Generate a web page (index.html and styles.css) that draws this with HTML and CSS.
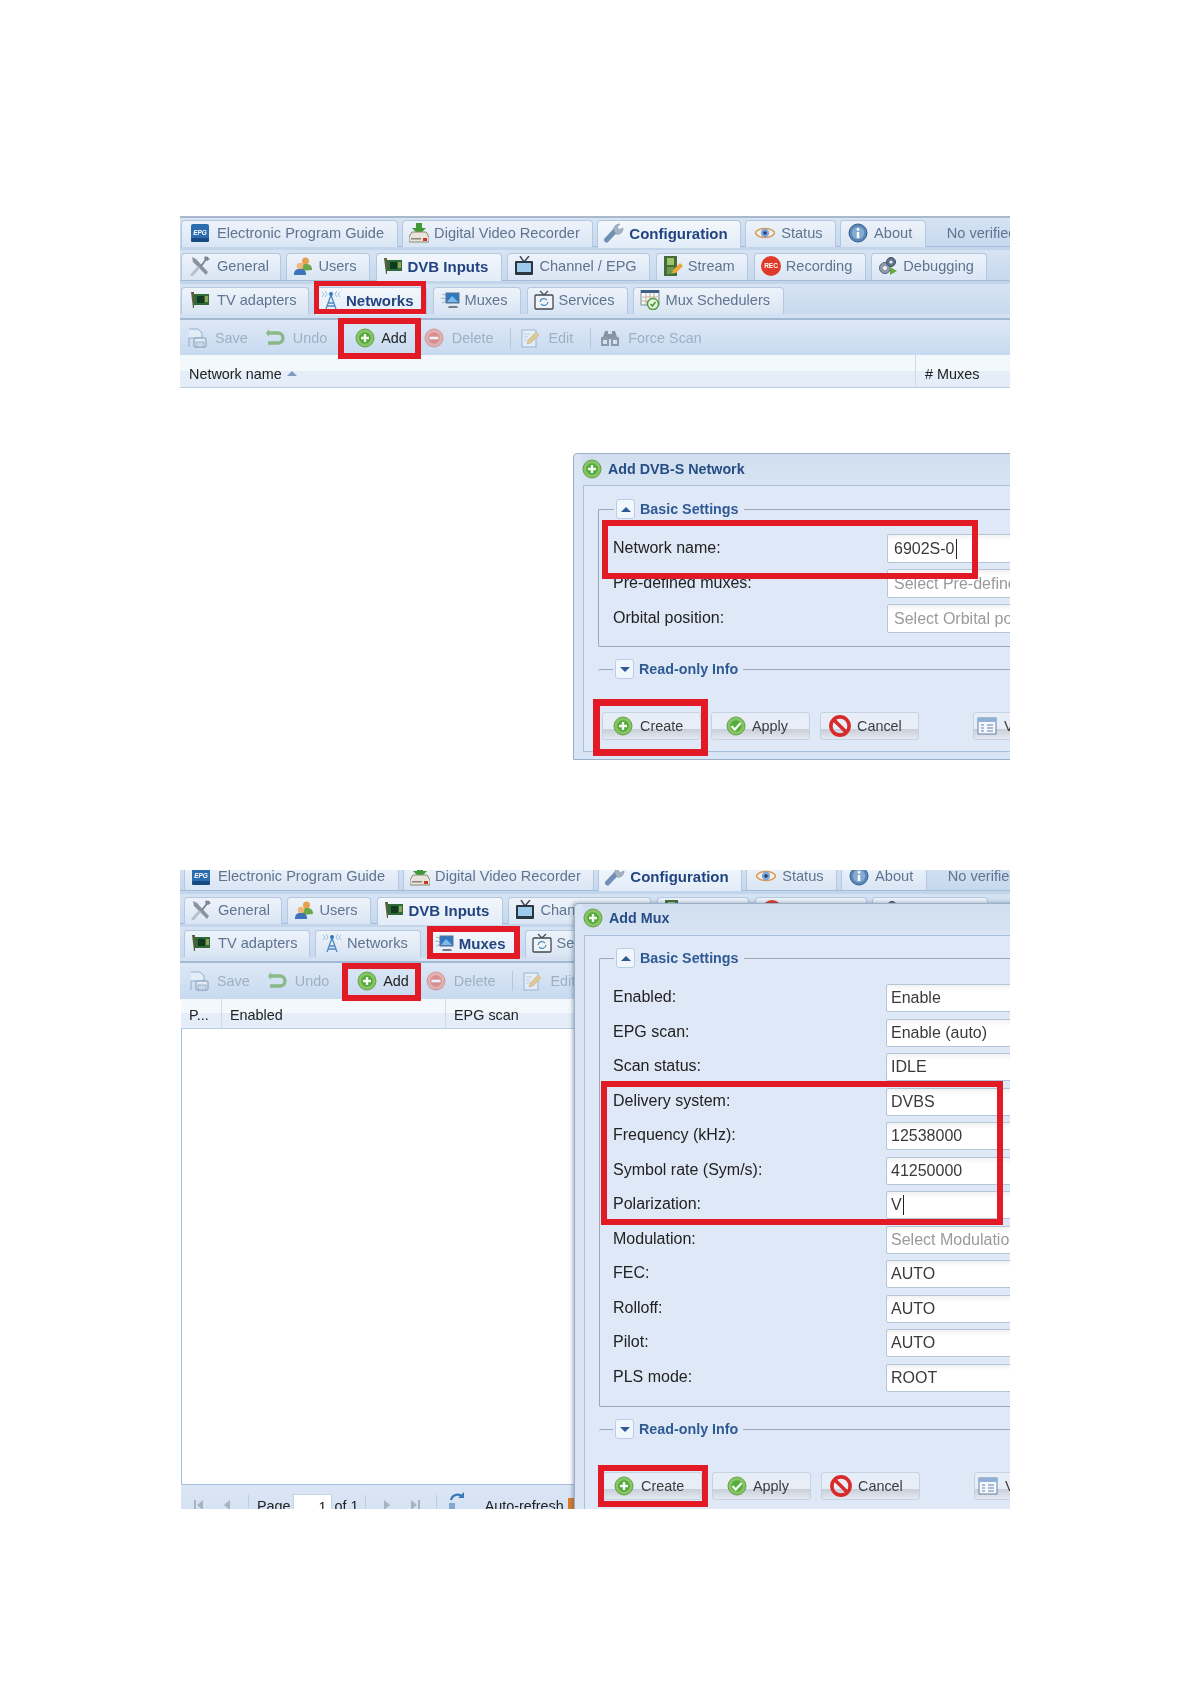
FILE: index.html
```html
<!DOCTYPE html>
<html lang="en">
<head>
<meta charset="utf-8">
<title>DVB network and mux setup</title>
<link rel="stylesheet" href="styles.css">
</head>
<body>
<svg class="defs" width="0" height="0" aria-hidden="true">
  <symbol id="epg" viewBox="0 0 20 20"><rect x="1" y="1" width="18" height="18" rx="2" fill="#2c6db0"/><rect x="1" y="15" width="18" height="4" rx="1.5" fill="#174a80"/><text x="10" y="11.5" font-size="6.5" font-weight="700" font-style="italic" font-family="Liberation Sans" text-anchor="middle" fill="#fff">EPG</text></symbol>
  <symbol id="dvr" viewBox="0 0 20 20"><path d="M7 0h6v5h4l-7 7-7-7h4z" fill="#3f9a35"/><path d="M0 14l3-5h14l3 5v5H0z" fill="#e8e4dc" stroke="#8d8577"/><path d="M2 15h10v1.500H2z" fill="#8d8577"/><rect x="14" y="15" width="4" height="3" fill="#c9372c"/></symbol>
  <symbol id="wrench" viewBox="0 0 20 20"><path d="M2.500 17L11 8" stroke="#6f8fb4" stroke-width="5" stroke-linecap="round"/><path d="M10 8c-1-3 1-7 6-7l-3 3 2 3 4-2c0 4-3 7-7 6z" fill="#a7b4c3" stroke="#75889e" stroke-width=".6"/></symbol>
  <symbol id="eye" viewBox="0 0 20 20"><path d="M0 10c4-6 16-6 20 0-4 6-16 6-20 0z" fill="#f4f1ea" stroke="#d59a58" stroke-width="1.400"/><circle cx="10" cy="10" r="4.200" fill="#7fa5d6"/><circle cx="10" cy="10" r="1.800" fill="#1f3f78"/></symbol>
  <symbol id="info" viewBox="0 0 20 20"><circle cx="10" cy="10" r="9" fill="#5a87b8" stroke="#33608f"/><circle cx="10" cy="10" r="6.200" fill="#86abd2"/><rect x="8.800" y="9" width="2.400" height="6" fill="#fff"/><circle cx="10" cy="6.400" r="1.400" fill="#fff"/></symbol>
  <symbol id="tools" viewBox="0 0 20 20"><path d="M2 1l4 2 12 13-2 3L3 6z" fill="#8a94a0"/><path d="M18 1l-7 9" stroke="#6d7784" stroke-width="1.500"/><path d="M15 0l5 3-3 2-3-2z" fill="#7d8793"/><path d="M8 12l-6 7" stroke="#b8c0c9" stroke-width="3" stroke-linecap="round"/></symbol>
  <symbol id="users" viewBox="0 0 20 20"><circle cx="12.500" cy="5" r="3.500" fill="#e8a04c"/><path d="M7 15c0-5 2-7 6-7s6 2 6 6z" fill="#6aa84a"/><circle cx="7" cy="10" r="3.300" fill="#f0b878"/><path d="M1 19c0-5 2-6 6-6s6 1 6 6z" fill="#3d74b8"/></symbol>
  <symbol id="card" viewBox="0 0 20 20"><path d="M1 2h3v16H3z" fill="#5a5f3a"/><rect x="4" y="4" width="15" height="11" fill="#2f6a38"/><rect x="7" y="6" width="7" height="7" fill="#123a1e"/><rect x="15" y="6" width="3" height="6" fill="#8da35c"/></symbol>
  <symbol id="tv" viewBox="0 0 20 20"><path d="M6 0l4 6 5-6" fill="none" stroke="#3a4653" stroke-width="1.400"/><rect x="1" y="5" width="18" height="14" rx="1" fill="#2b3640"/><rect x="3" y="7" width="14" height="9" fill="#9ccbec"/></symbol>
  <symbol id="stream" viewBox="0 0 20 20"><rect x="1" y="0" width="13" height="20" fill="#456d3a"/><rect x="4" y="2" width="7" height="7" fill="#9cc46c"/><rect x="4" y="11" width="7" height="7" fill="#6c9a4c"/><path d="M9 17l1-3 7-7 3 3-7 7z" fill="#eba73c"/></symbol>
  <symbol id="rec" viewBox="0 0 20 20"><circle cx="10" cy="10" r="10" fill="#df3a2a"/><text x="10" y="12" font-size="6.500" font-weight="700" font-family="Liberation Sans" text-anchor="middle" fill="#fff">REC</text></symbol>
  <symbol id="debug" viewBox="0 0 20 20"><circle cx="7" cy="12" r="5.500" fill="#8f9bab" stroke="#5a6675"/><circle cx="7" cy="12" r="2" fill="#eef2f7"/><circle cx="13" cy="6" r="4.500" fill="#5f7390" stroke="#3d4d64"/><circle cx="13" cy="6" r="1.600" fill="#eef2f7"/><path d="M12 11l7 4-7 4z" fill="#62a83c"/></symbol>
  <symbol id="tower" viewBox="0 0 20 20"><path d="M10 5L5 19M10 5l5 14M7 13h6M6 16h8" stroke="#4d8ac0" stroke-width="1.300" fill="none"/><circle cx="10" cy="4" r="2" fill="#2e7ac0"/><path d="M4 1l2 3-2 3M16 1l-2 3 2 3M1 2l2 2-2 3M19 2l-2 2 2 3" stroke="#9cc0e0" fill="none"/></symbol>
  <symbol id="monitor" viewBox="0 0 20 20"><path d="M2 4l6 2M1 8l6 1M2 13l5-2" stroke="#9bb6cf" fill="none"/><rect x="6" y="3" width="13" height="10" fill="#2f78c4" stroke="#5f7288"/><path d="M7 12l5-6 6 6z" fill="#7fbbe8"/><path d="M9 16h8l1 2H8z" fill="#6f7d8b"/></symbol>
  <symbol id="services" viewBox="0 0 20 20"><path d="M6 1l4 4 4-4" fill="none" stroke="#3f4954" stroke-width="1.200"/><rect x="1" y="5" width="18" height="14" rx="1" fill="#f0f4f8" stroke="#3f4954" stroke-width="1.300"/><path d="M6 12a4 4 0 0 1 7-2M14 12a4 4 0 0 1-7 2" fill="none" stroke="#4f8fbf" stroke-width="1.300"/></symbol>
  <symbol id="sched" viewBox="0 0 20 20"><rect x="1" y="0" width="18" height="15" fill="#f4f6f9" stroke="#7d8b9b"/><rect x="1" y="0" width="18" height="3" fill="#3f5f88"/><path d="M2 7h16M2 11h16M6 3v12M10 3v12M14 3v12" stroke="#b89a78" stroke-width=".7"/><circle cx="13" cy="14" r="5.500" fill="#e5f3da" stroke="#4d9a3c" stroke-width="1.400"/><path d="M10.500 14l2 2 3-4" fill="none" stroke="#3a8a2c" stroke-width="1.300"/></symbol>
  <symbol id="save" viewBox="0 0 20 20"><path d="M2 1h9l4 4v5H2v9" fill="#f2f5f9" stroke="#5d83ad"/><rect x="7" y="10" width="12" height="9" rx="1" fill="#eef2f6" stroke="#3d5f85"/><rect x="9" y="14" width="8" height="5" fill="#c7d3e0" stroke="#3d5f85" stroke-width=".6"/></symbol>
  <symbol id="undo" viewBox="0 0 20 20"><path d="M3 5h10a4.500 4.500 0 0 1 0 10H3" fill="none" stroke="#4f9a2e" stroke-width="3.400"/><path d="M4 1l-3 4 3 4z" fill="#4f9a2e"/></symbol>
  <symbol id="add" viewBox="0 0 20 20"><circle cx="10" cy="10" r="9" fill="#86c465" stroke="#65a047"/><circle cx="10" cy="10" r="5.800" fill="#52a83c"/><path d="M6 10h8M10 6v8" stroke="#f4fbef" stroke-width="2.400"/></symbol>
  <symbol id="del" viewBox="0 0 20 20"><circle cx="10" cy="10" r="9" fill="#ec8a7e" stroke="#cf5a4e"/><circle cx="10" cy="10" r="5.800" fill="#e04a3c"/><path d="M5.500 10h9" stroke="#fff" stroke-width="2.600"/></symbol>
  <symbol id="edit" viewBox="0 0 20 20"><rect x="2" y="2" width="14" height="17" fill="#f4f7fb" stroke="#6f90b4"/><path d="M4 6h6M4 9h4M4 12h3" stroke="#a8bdd3"/><path d="M7 16l1-4 8-8 3 3-8 8z" fill="#e9b54c" stroke="#b5862c" stroke-width=".5"/></symbol>
  <symbol id="scan" viewBox="0 0 20 20"><path d="M3 9l2-6h3v6zM12 9V3h3l2 6z" fill="#4a5562"/><rect x="1" y="9" width="8" height="9" fill="#55606d"/><rect x="11" y="9" width="8" height="9" fill="#55606d"/><rect x="3" y="12" width="4" height="4" fill="#dce4ee"/><rect x="13" y="12" width="4" height="4" fill="#dce4ee"/><rect x="8" y="6" width="4" height="5" fill="#4a5562"/></symbol>
  <symbol id="apply" viewBox="0 0 20 20"><circle cx="10" cy="10" r="9" fill="#86c465" stroke="#65a047"/><circle cx="10" cy="10" r="5.800" fill="#55ab3e"/><path d="M5.500 10l3.200 3.500 6-6.500" fill="none" stroke="#f4fbef" stroke-width="2.200"/></symbol>
  <symbol id="cancel" viewBox="0 0 20 20"><circle cx="10" cy="10" r="8.300" fill="none" stroke="#d92a2a" stroke-width="3.200"/><path d="M4.500 4.500l11 11" stroke="#d92a2a" stroke-width="3.200"/></symbol>
  <symbol id="view" viewBox="0 0 20 20"><rect x="1" y="2" width="18" height="16" fill="#f5f8fc" stroke="#5d80a8"/><rect x="1" y="2" width="18" height="4" fill="#8fb2d6"/><path d="M4 9h3M4 12h3M4 15h3M10 9h6M10 12h6M10 15h6" stroke="#5d80a8"/></symbol>
  <symbol id="first" viewBox="0 0 14 14"><path d="M3 2v10" stroke="#a8b3c0" stroke-width="2"/><path d="M11 2v10L5 7z" fill="#a8b3c0"/></symbol>
  <symbol id="prev" viewBox="0 0 14 14"><path d="M10 2v10L4 7z" fill="#a8b3c0"/></symbol>
  <symbol id="next" viewBox="0 0 14 14"><path d="M4 2v10l6-5z" fill="#a8b3c0"/></symbol>
  <symbol id="last" viewBox="0 0 14 14"><path d="M11 2v10" stroke="#a8b3c0" stroke-width="2"/><path d="M3 2v10l6-5z" fill="#a8b3c0"/></symbol>
  <symbol id="refresh" viewBox="0 0 20 20"><path d="M4 9a7 7 0 0 1 12-3" fill="none" stroke="#3b78b8" stroke-width="2.200"/><path d="M17 1v6h-6z" fill="#3b78b8"/><rect x="2" y="12" width="6" height="6" fill="#7fa9d4"/></symbol>
</svg>

<main class="page">
  <section class="shot shot-net">
    <div class="tabbar tabbar-first">
      <div class="tab"><svg class="i"><use href="#epg"/></svg>Electronic Program Guide</div>
      <div class="tab"><svg class="i"><use href="#dvr"/></svg>Digital Video Recorder</div>
      <div class="tab tab-on"><svg class="i"><use href="#wrench"/></svg>Configuration</div>
      <div class="tab tab-status"><svg class="i"><use href="#eye"/></svg>Status</div>
      <div class="tab tab-about"><svg class="i"><use href="#info"/></svg>About</div>
      <div class="verified">No verified</div>
    </div>
    <div class="tabbar">
      <div class="tab"><svg class="i"><use href="#tools"/></svg>General</div>
      <div class="tab"><svg class="i"><use href="#users"/></svg>Users</div>
      <div class="tab tab-on"><svg class="i"><use href="#card"/></svg>DVB Inputs</div>
      <div class="tab"><svg class="i"><use href="#tv"/></svg>Channel / EPG</div>
      <div class="tab"><svg class="i"><use href="#stream"/></svg>Stream</div>
      <div class="tab"><svg class="i"><use href="#rec"/></svg>Recording</div>
      <div class="tab"><svg class="i"><use href="#debug"/></svg>Debugging</div>
    </div>
    <div class="tabbar tabbar-last">
      <div class="tab"><svg class="i"><use href="#card"/></svg>TV adapters</div>
      <div class="tab tab-on"><svg class="i"><use href="#tower"/></svg>Networks</div>
      <div class="tab"><svg class="i"><use href="#monitor"/></svg>Muxes</div>
      <div class="tab"><svg class="i"><use href="#services"/></svg>Services</div>
      <div class="tab"><svg class="i"><use href="#sched"/></svg>Mux Schedulers</div>
    </div>
    <div class="toolbar">
      <div class="tool off"><svg class="i"><use href="#save"/></svg>Save</div>
      <div class="tool off tool-wide"><svg class="i"><use href="#undo"/></svg>Undo</div>
      <div class="tool"><svg class="i"><use href="#add"/></svg>Add</div>
      <div class="tool off"><svg class="i"><use href="#del"/></svg>Delete</div>
      <div class="tool-sep"></div>
      <div class="tool off"><svg class="i"><use href="#edit"/></svg>Edit</div>
      <div class="tool-sep"></div>
      <div class="tool off"><svg class="i"><use href="#scan"/></svg>Force Scan</div>
    </div>
    <div class="gridhead">
      <div class="col col-netname">Network name <span class="sort"></span></div>
      <div class="col col-end">#&nbsp;Muxes</div>
    </div>
    <div class="red red-networks"></div>
    <div class="red red-add"></div>
  </section>

  <section class="shot shot-dialog">
    <div class="dialog">
      <div class="dialog-title"><svg class="i"><use href="#add"/></svg>Add DVB-S Network</div>
      <div class="dialog-body">
        <fieldset class="fs">
          <legend class="fs-legend"><span class="toggle"><span class="tri-up"></span></span>Basic Settings</legend>
          <div class="row"><div class="lbl">Network name:</div><div class="inp">6902S-0<span class="caret"></span></div></div>
          <div class="row"><div class="lbl">Pre-defined muxes:</div><div class="inp ph">Select Pre-defined muxes</div></div>
          <div class="row"><div class="lbl">Orbital position:</div><div class="inp ph">Select Orbital position</div></div>
        </fieldset>
        <fieldset class="fs fs-closed">
          <legend class="fs-legend"><span class="toggle"><span class="tri-down"></span></span>Read-only Info</legend>
        </fieldset>
        <div class="buttons">
          <div class="btn btn-create"><svg class="i"><use href="#add"/></svg>Create</div>
          <div class="btn btn-apply"><svg class="i"><use href="#apply"/></svg>Apply</div>
          <div class="btn btn-cancel"><svg class="i"><use href="#cancel"/></svg>Cancel</div>
          <div class="btn btn-view"><svg class="i"><use href="#view"/></svg>View level</div>
        </div>
      </div>
    </div>
    <div class="red red-netname"></div>
    <div class="red red-create"></div>
  </section>

  <section class="shot shot-mux">
    <div class="tabbar tabbar-first tabbar-cut">
      <div class="tab"><svg class="i"><use href="#epg"/></svg>Electronic Program Guide</div>
      <div class="tab"><svg class="i"><use href="#dvr"/></svg>Digital Video Recorder</div>
      <div class="tab tab-on"><svg class="i"><use href="#wrench"/></svg>Configuration</div>
      <div class="tab tab-status"><svg class="i"><use href="#eye"/></svg>Status</div>
      <div class="tab tab-about"><svg class="i"><use href="#info"/></svg>About</div>
      <div class="verified">No verified</div>
    </div>
    <div class="tabbar">
      <div class="tab"><svg class="i"><use href="#tools"/></svg>General</div>
      <div class="tab"><svg class="i"><use href="#users"/></svg>Users</div>
      <div class="tab tab-on"><svg class="i"><use href="#card"/></svg>DVB Inputs</div>
      <div class="tab"><svg class="i"><use href="#tv"/></svg>Channel / EPG</div>
      <div class="tab"><svg class="i"><use href="#stream"/></svg>Stream</div>
      <div class="tab"><svg class="i"><use href="#rec"/></svg>Recording</div>
      <div class="tab"><svg class="i"><use href="#debug"/></svg>Debugging</div>
    </div>
    <div class="tabbar tabbar-last">
      <div class="tab"><svg class="i"><use href="#card"/></svg>TV adapters</div>
      <div class="tab"><svg class="i"><use href="#tower"/></svg>Networks</div>
      <div class="tab tab-on"><svg class="i"><use href="#monitor"/></svg>Muxes</div>
      <div class="tab"><svg class="i"><use href="#services"/></svg>Services</div>
      <div class="tab"><svg class="i"><use href="#sched"/></svg>Mux Schedulers</div>
    </div>
    <div class="toolbar">
      <div class="tool off"><svg class="i"><use href="#save"/></svg>Save</div>
      <div class="tool off tool-wide"><svg class="i"><use href="#undo"/></svg>Undo</div>
      <div class="tool"><svg class="i"><use href="#add"/></svg>Add</div>
      <div class="tool off"><svg class="i"><use href="#del"/></svg>Delete</div>
      <div class="tool-sep"></div>
      <div class="tool off"><svg class="i"><use href="#edit"/></svg>Edit</div>
    </div>
    <div class="gridhead">
      <div class="col col-p">P...</div>
      <div class="col col-enabled">Enabled</div>
      <div class="col col-end">EPG scan</div>
    </div>
    <div class="gridbody"></div>
    <div class="pager">
      <svg class="pg"><use href="#first"/></svg>
      <svg class="pg"><use href="#prev"/></svg>
      <div class="pg-sep"></div>
      <span class="pg-page">Page</span><div class="pg-input">1</div><span class="pg-of">of 1</span>
      <div class="pg-sep pg-sep-mid"></div>
      <svg class="pg"><use href="#next"/></svg>
      <svg class="pg"><use href="#last"/></svg>
      <div class="pg-sep"></div>
      <svg class="i pg-refresh"><use href="#refresh"/></svg>
      <span class="autorefresh">Auto-refresh</span>
      <span class="check"></span>
    </div>

    <div class="dialog dialog-mux">
      <div class="dialog-title"><svg class="i"><use href="#add"/></svg>Add Mux</div>
      <div class="dialog-body">
        <fieldset class="fs">
          <legend class="fs-legend"><span class="toggle"><span class="tri-up"></span></span>Basic Settings</legend>
          <div class="row"><div class="lbl">Enabled:</div><div class="inp">Enable</div></div>
          <div class="row"><div class="lbl">EPG scan:</div><div class="inp">Enable (auto)</div></div>
          <div class="row"><div class="lbl">Scan status:</div><div class="inp">IDLE</div></div>
          <div class="row"><div class="lbl">Delivery system:</div><div class="inp">DVBS</div></div>
          <div class="row"><div class="lbl">Frequency (kHz):</div><div class="inp">12538000</div></div>
          <div class="row"><div class="lbl">Symbol rate (Sym/s):</div><div class="inp">41250000</div></div>
          <div class="row"><div class="lbl">Polarization:</div><div class="inp">V<span class="caret"></span></div></div>
          <div class="row"><div class="lbl">Modulation:</div><div class="inp ph">Select Modulation</div></div>
          <div class="row"><div class="lbl">FEC:</div><div class="inp">AUTO</div></div>
          <div class="row"><div class="lbl">Rolloff:</div><div class="inp">AUTO</div></div>
          <div class="row"><div class="lbl">Pilot:</div><div class="inp">AUTO</div></div>
          <div class="row"><div class="lbl">PLS mode:</div><div class="inp">ROOT</div></div>
        </fieldset>
        <fieldset class="fs fs-closed">
          <legend class="fs-legend"><span class="toggle"><span class="tri-down"></span></span>Read-only Info</legend>
        </fieldset>
        <div class="buttons">
          <div class="btn btn-create"><svg class="i"><use href="#add"/></svg>Create</div>
          <div class="btn btn-apply"><svg class="i"><use href="#apply"/></svg>Apply</div>
          <div class="btn btn-cancel"><svg class="i"><use href="#cancel"/></svg>Cancel</div>
          <div class="btn btn-view"><svg class="i"><use href="#view"/></svg>View level</div>
        </div>
      </div>
    </div>
    <div class="red red-muxes"></div>
    <div class="red red-add2"></div>
    <div class="red red-delivery"></div>
    <div class="red red-create2"></div>
  </section>
</main>
</body>
</html>
```

FILE: styles.css
```css
* { box-sizing: border-box; }
html, body { margin: 0; background: #fff; }
body { font-family: "Liberation Sans", Arial, sans-serif; color: #222; min-height: 1684px; }
.defs { position: absolute; }
.page { padding: 216px 0 0 180px; }

.shot { position: relative; overflow: hidden; width: 830px; filter: blur(0.5px); }
.shot-net { height: 172px; background: #fff; }
.shot-dialog { width: 437px; height: 307px; margin: 65px 0 0 393px; }
.shot-mux { height: 639px; margin-top: 110px; }

.i { width: 20px; height: 20px; flex: none; }

/* tab strips */
.tabbar { display: flex; gap: 5.5px; height: 34px; padding: 3px 0 0 1px; background: linear-gradient(#d6e3f3, #c6d8ee); border-bottom: 3px solid #c3d5ea; box-shadow: inset 0 -1px 0 #a5bcd8; font-size: 14.6px; color: #5f7490; white-space: nowrap; }
.tabbar-first { gap: 4px; border-top: 2px solid #a9b8ca; padding-top: 2px; }
.tabbar-last { height: 36px; border-bottom: 2px solid #a3b8d2; box-shadow: inset 0 -4px 0 #d2e0f1; }
.tab { display: flex; align-items: center; gap: 5px; height: 27px; padding: 0 12.5px 2px 6px; background: linear-gradient(#eef3fa, #d9e5f4); border: 1px solid #b4c8e0; border-bottom: 0; border-radius: 4px 4px 0 0; }
.tab:first-child { padding-left: 8px; padding-right: 11px; gap: 7px; }
.tabbar-first .tab:first-child { padding-right: 13px; }
.tab-status { padding-left: 9px; gap: 6px; }
.tab-about { padding-left: 7px; gap: 6px; }
.tab-on { color: #23457f; font-size: 15px; font-weight: 700; background: linear-gradient(#f3f7fc, #e2ecf8); height: 28px; padding-bottom: 3px; }
.verified { align-self: center; margin: 0 0 2px 17px; color: #60748f; }

.shot-mux .tabbar { height: 33px; padding-left: 4px; }
.shot-mux .tab:first-child { padding-left: 6px; }
.shot-mux .tabbar-last { height: 36px; }
.shot-mux .tabbar-cut { height: 33px; margin-top: -9px; padding-left: 4px; border-top: 0; }

/* toolbar */
.toolbar { display: flex; align-items: center; height: 35px; padding-left: 7px; background: linear-gradient(#dde8f6, #c8daf0); font-size: 14.4px; color: #222; white-space: nowrap; }
.tool { display: flex; align-items: center; gap: 6px; margin-right: 17px; }
.tool.off { gap: 8px; }
.tool-wide { margin-right: 28px; }
.off { color: #9fb0c4; }
.off .i { opacity: .55; }
.tool-sep { width: 1px; height: 20px; margin: 0 9px 0 0; background: #b5c7dc; }
.shot-mux .toolbar { height: 36px; padding-left: 9px; border-bottom: 1px solid #c9d9ec; }

/* grid */
.gridhead { display: flex; height: 33px; background: linear-gradient(#f3f8fd 50%, #e4edf8 50%); border-bottom: 1px solid #b9cde3; font-size: 14.4px; color: #222; white-space: nowrap; }
.col { display: flex; align-items: center; padding: 5px 0 0 9px; border-right: 1px solid #d0dbe8; }
.col-end { border-right: 0; }
.col-netname { width: 736px; }
.sort { width: 0; height: 0; margin-left: 5px; border: 5px solid transparent; border-top: 0; border-bottom: 5px solid #7d9cc0; }
.col-p { width: 41px; padding-left: 11px; }
.col-enabled { width: 224px; }
.shot-mux .gridhead { height: 30px; margin-left: 1px; }
.shot-mux .col { padding-top: 3px; padding-left: 8px; }
.gridbody { height: 455px; background: #fff; border-left: 1px solid #9dbbe2; margin-left: 1px; }

.pager { display: flex; align-items: flex-start; gap: 14px; height: 40px; margin-left: 1px; padding: 10px 0 0 11px; background: linear-gradient(#dbe6f5, #d2e0f2); border-top: 1px solid #a6bfdc; font-size: 14.4px; white-space: nowrap; }
.pg { width: 14px; height: 14px; flex: none; margin-top: 3px; }
.pg-sep { width: 1px; height: 24px; flex: none; background: #bccde1; }
.pg-page { margin: 3px 0 0 -6px; }
.pg-input { width: 39px; height: 28px; flex: none; margin: -1px 0 0 -12px; padding: 4px 4px 0 0; text-align: right; background: #fff; border: 1px solid #c4d2e3; }
.pg-of { margin: 3px 0 0 -11px; }
.pg-sep-mid { margin-left: -8px; }
.pg-refresh { margin: -4px 0 0 -4px; }
.autorefresh { margin: 3px 0 0 4px; }
.check { width: 12px; height: 14px; flex: none; margin: 3px 0 0 -10px; background: #d97d26; }

/* dialogs */
.dialog { background: #d9e5f4; border: 1px solid #9ab0c8; border-radius: 4px 0 0 0; height: 100%; padding: 0 0 0 9px; width: 560px; }
.dialog-title { display: flex; align-items: center; gap: 6px; height: 31px; padding-bottom: 2px; margin-left: -1px; font-size: 14.3px; font-weight: 700; color: #274d85; background: linear-gradient(#d0deef, #d8e4f3); }
.dialog-body { height: 267px; padding: 13px 0 0 14px; background: #dfe8f6; border: 1px solid #a9c0dc; }
.fs { margin: 0; padding: 2px 0 13px 14px; border: 0; border-top: 1px solid #9aa8b8; border-left: 1px solid #9aa8b8; border-bottom: 1px solid #9aa8b8; border-radius: 2px 0 0 2px; min-width: 0; }
.fs-legend { display: flex; align-items: center; gap: 5px; height: 20px; margin: 0 0 13px 1px; padding: 0 5px 0 2px; font-size: 14.3px; font-weight: 700; color: #2f5a94; white-space: nowrap; }
.fs-closed { margin-top: 12px; padding: 0; height: 20px; border-left: 0; border-bottom: 0; }
.fs-closed .fs-legend { margin: 0 0 0 15px; }
.toggle { display: flex; align-items: center; justify-content: center; width: 19px; height: 20px; background: #f1f6fc; border: 1px solid #b9cde6; border-radius: 3px; }
.tri-up { width: 0; height: 0; border: 5px solid transparent; border-top: 0; border-bottom: 5px solid #2f5a94; }
.tri-down { width: 0; height: 0; border: 5px solid transparent; border-bottom: 0; border-top: 5px solid #2f5a94; }
.row { display: flex; align-items: center; margin-top: 6px; height: 29px; font-size: 16px; white-space: nowrap; }
.row:first-of-type { margin-top: 0; }
.lbl { width: 274px; padding-bottom: 2px; color: #222; }
.inp { display: flex; align-items: center; width: 200px; height: 100%; padding-left: 6px; background: linear-gradient(#f2f2f2 0, #fff 6px); border: 1px solid #b5c5d8; border-radius: 2px 0 0 2px; color: #3a3a3a; }
.ph { color: #9a9a9a; }
.caret { width: 1px; height: 20px; margin-left: 1px; background: #222; }
.buttons { display: flex; gap: 10px; margin-top: 33px; margin-left: 4px; }
.btn { display: flex; align-items: center; gap: 7px; flex: none; width: 99px; height: 28px; font-size: 14.4px; color: #3c3c3c; border: 1px solid #c5d2e2; border-radius: 3px; background: linear-gradient(#e8eef7 60%, #c8ced8 62%, #e4e9f1); white-space: nowrap; }
.btn-create { padding-left: 10px; }
.btn-apply { padding-left: 14px; gap: 6px; }
.btn-cancel { padding-left: 8px; gap: 6px; }
.btn-cancel .i { width: 22px; height: 22px; }
.btn-view { margin-left: 44px; width: 130px; padding-left: 3px; }

.dialog-mux { position: absolute; left: 394px; top: 33px; height: 620px; box-shadow: -1px 0 4px rgba(60, 80, 110, .5); }
.dialog-mux .dialog-title { padding-bottom: 3px; }
.dialog-mux .dialog-body { height: 600px; padding-top: 12px; }
.dialog-mux .fs:not(.fs-closed) { padding-left: 13px; padding-bottom: 14px; }
.dialog-mux .fs:not(.fs-closed) .fs-legend { margin: 0 0 14px 1px; }
.dialog-mux .lbl { width: 273px; }
.dialog-mux .inp { padding-left: 4px; }
.dialog-mux .row { height: 28px; margin-top: 6.55px; }
.dialog-mux .row:first-of-type { margin-top: 0; }
.dialog-mux .fs-closed { margin-top: 12px; }
.dialog-mux .fs-closed .fs-legend { margin-left: 14px; }

/* red callouts drawn over the screenshots */
.red { position: absolute; border: 6px solid #e21a25; }
.red-networks { left: 134px; top: 65px; width: 112px; height: 33px; border-width: 5px; }
.red-add { left: 158px; top: 102px; width: 83px; height: 41px; }
.red-netname { left: 29px; top: 67px; width: 376px; height: 59px; }
.red-create { left: 20px; top: 246px; width: 115px; height: 57px; border-width: 7px; }
.red-muxes { left: 247px; top: 56px; width: 93px; height: 33px; border-width: 6px; }
.red-add2 { left: 162px; top: 93px; width: 79px; height: 38px; }
.red-delivery { left: 421px; top: 211px; width: 402px; height: 144px; }
.red-create2 { left: 418px; top: 595px; width: 110px; height: 42px; }
```
